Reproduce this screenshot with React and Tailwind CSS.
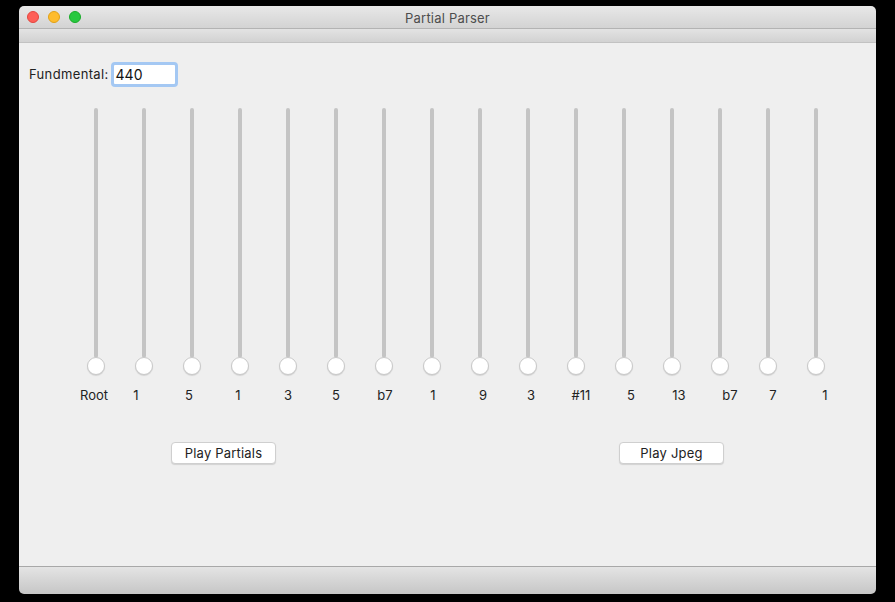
import React from "react";

const labels = [
  { text: "Root", shift: "-ml-[4px]" },
  { text: "1", shift: "-ml-[16px]" },
  { text: "5", shift: "-ml-[6px]" },
  { text: "1", shift: "-ml-[4px]" },
  { text: "3", shift: "ml-0" },
  { text: "5", shift: "ml-0" },
  { text: "b7", shift: "ml-[2px]" },
  { text: "1", shift: "ml-[2px]" },
  { text: "9", shift: "ml-[6px]" },
  { text: "3", shift: "ml-[6px]" },
  { text: "#11", shift: "ml-[10px]" },
  { text: "5", shift: "ml-[14px]" },
  { text: "13", shift: "ml-[14px]" },
  { text: "b7", shift: "ml-[20px]" },
  { text: "7", shift: "ml-[10px]" },
  { text: "1", shift: "ml-[18px]" },
];

function Slider() {
  return (
    <div className="w-12 flex flex-col items-center">
      <div className="w-[4px] h-[250px] rounded-full bg-[#c4c4c4]" />
      <div className="-mt-[1px] w-[18px] h-[18px] rounded-full bg-white border border-[#c9c9c9] shadow-[0_1px_1px_rgba(0,0,0,0.12)]" />
    </div>
  );
}

function MacButton({ children }) {
  return (
    <button className="w-[105px] h-[22px] bg-white rounded-[4px] border border-[#cfcfcf] shadow-[0_1px_1px_rgba(0,0,0,0.12)] text-[13px] text-[#222] leading-none tracking-[0.2px]">
      {children}
    </button>
  );
}

export default function App() {
  return (
    <div className="h-screen w-full bg-black pt-[6px] px-[19px] font-['Inter','Liberation_Sans',sans-serif]">
      <div className="h-[588px] flex flex-col rounded-[5px] overflow-hidden">
        {/* title bar */}
        <div className="relative h-[23px] flex items-center justify-center pt-[3px] bg-gradient-to-b from-[#e8e8e8] to-[#d3d3d3] border-b border-[#b3b3b3]">
          <div className="absolute left-[8px] top-[5px] flex gap-[9px]">
            <span className="w-[12px] h-[12px] rounded-full bg-[#fe5f57] border border-[#e2463f]" />
            <span className="w-[12px] h-[12px] rounded-full bg-[#febc2e] border border-[#e1a116]" />
            <span className="w-[12px] h-[12px] rounded-full bg-[#28c840] border border-[#1aab29]" />
          </div>
          <span className="text-[13px] text-[#4d4d4d] tracking-[0.2px]">Partial Parser</span>
        </div>
        {/* toolbar strip */}
        <div className="h-[14px] bg-gradient-to-b from-[#e3e3e3] to-[#d2d2d2] border-b border-[#c2c2c2]" />

        {/* content */}
        <div className="flex-1 bg-[#efefef] flex flex-col">
          <div className="flex items-center pl-[10px] mt-[19px]">
            <span className="text-[13px] text-[#222] tracking-[0.35px]">Fundmental:</span>
            <div className="ml-[2px] w-[67px] h-[25px] bg-white border-[3px] border-[#a4c8f3] rounded-[4px] flex items-center pl-[2px] text-[14px] text-[#111]">
              440
            </div>
          </div>

          <div className="flex ml-[53px] mt-[21px]">
            {labels.map((l, i) => (
              <Slider key={i} />
            ))}
          </div>

          <div className="flex ml-[53px] mt-[12px]">
            {labels.map((l, i) => (
              <div key={i} className="w-12 flex justify-center">
                <span className={`text-[13px] text-[#222] leading-[16px] ${l.shift}`}>{l.text}</span>
              </div>
            ))}
          </div>

          <div className="flex ml-[152px] mt-[39px] gap-[343px]">
            <MacButton>Play Partials</MacButton>
            <MacButton>Play Jpeg</MacButton>
          </div>
        </div>

        {/* bottom bar */}
        <div className="h-[28px] bg-gradient-to-b from-[#e4e4e4] to-[#c6c6c6] border-t border-[#a8a8a8]" />
      </div>
    </div>
  );
}
